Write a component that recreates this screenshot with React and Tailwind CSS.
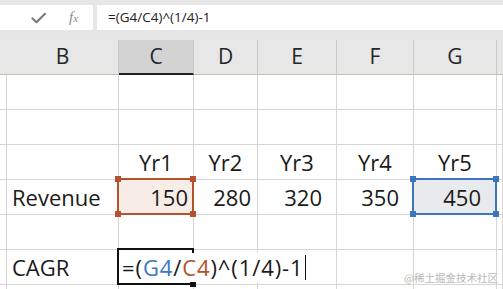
import React from "react";

const Check = () => (
  <svg width="16" height="12" viewBox="0 0 16 12" className="block">
    <path d="M1.5 6.5 L5.5 10.2 L14 1.8" fill="none" stroke="#7a7a7a" strokeWidth="2.2" strokeLinecap="round" strokeLinejoin="round" />
  </svg>
);

const Corner = ({ className, color }) => (
  <div className={`absolute w-[6px] h-[6px] ${color} ${className}`} />
);

export default function App() {
  const hdr = "h-[35px] bg-[#e7e7e7] border-r border-b border-r-[#cdc8c1] border-b-[#cabfae] flex items-center justify-center text-[21px] text-[#262626]";
  const cell = "h-[35px] border-r border-b border-[#d6d6d6] flex items-center text-[22px] text-[#1a1a1a]";
  return (
    <div className="relative w-[503px] h-[289px] overflow-hidden bg-white font-['Open_Sans',sans-serif]">
      {/* formula bar */}
      <div className="h-[40px] bg-[#e6e6e6] pt-[5px]">
        <div className="flex h-[25px]">
          <div className="w-[93px] bg-white flex items-center">
            <div className="ml-[31px]"><Check /></div>
            <div className="ml-[22px] font-['Liberation_Serif',serif] italic text-[15px] text-[#8a8a8a] leading-none">
              f<span className="text-[11px]">x</span>
            </div>
          </div>
          <div className="w-[4px]" />
          <div className="flex-1 bg-white pl-[11px] flex items-center text-[13.5px] text-[#222]">=(G4/C4)^(1/4)-1</div>
        </div>
      </div>

      {/* grid */}
      <div className="grid grid-cols-[7px_112px_75px_64px_79px_77px_83px_6px]">
        {/* header */}
        <div className="h-[35px] bg-[#e7e7e7] border-b border-[#cabfae]" />
        <div className={hdr}>B</div>
        <div className="h-[35px] bg-[#d3d3d3] border-r border-r-[#cdc8c1] border-b-2 border-b-[#1f1f1f] flex items-center justify-center text-[21px] text-[#262626]">C</div>
        <div className={hdr}>D</div>
        <div className={hdr}>E</div>
        <div className={hdr}>F</div>
        <div className={hdr}>G</div>
        <div className="h-[35px] bg-[#e7e7e7] border-b border-[#cabfae]" />

        {/* rows 1-2 empty */}
        {[0, 1].map((r) => (
          <React.Fragment key={r}>
            <div className={cell} />
            <div className={cell} />
            <div className={cell} />
            <div className={cell} />
            <div className={cell} />
            <div className={cell} />
            <div className={cell} />
            <div className={cell} />
          </React.Fragment>
        ))}

        {/* row 3: years */}
        <div className={cell} />
        <div className={cell} />
        <div className={`${cell} justify-center`}>Yr1</div>
        <div className={`${cell} justify-center`}>Yr2</div>
        <div className={`${cell} justify-center`}>Yr3</div>
        <div className={`${cell} justify-center`}>Yr4</div>
        <div className={`${cell} justify-center`}>Yr5</div>
        <div className={cell} />

        {/* row 4: revenue */}
        <div className={cell} />
        <div className={`${cell} pl-[5px]`}>Revenue</div>
        <div className={`${cell} relative justify-end pr-[5px] bg-[#f7ece6]`}>
          <span className="relative z-10">150</span>
          <div className="absolute -left-[2px] -top-[2px] w-[77px] h-[37px] border-2 border-[#b5522e]">
            <Corner color="bg-[#b5522e]" className="-left-[4px] -top-[4px]" />
            <Corner color="bg-[#b5522e]" className="-right-[4px] -top-[4px]" />
            <Corner color="bg-[#b5522e]" className="-left-[4px] -bottom-[4px]" />
            <Corner color="bg-[#b5522e]" className="-right-[4px] -bottom-[4px]" />
          </div>
        </div>
        <div className={`${cell} justify-end pr-[6px]`}>280</div>
        <div className={`${cell} justify-end pr-[14px]`}>320</div>
        <div className={`${cell} justify-end pr-[14px]`}>350</div>
        <div className={`${cell} relative justify-end pr-[15px] bg-[#e9eaed]`}>
          <span className="relative z-10">450</span>
          <div className="absolute -left-[2px] -top-[2px] w-[85px] h-[37px] border-2 border-[#3e73bd]">
            <Corner color="bg-[#3e73bd]" className="-left-[4px] -top-[4px]" />
            <Corner color="bg-[#3e73bd]" className="-right-[4px] -top-[4px]" />
            <Corner color="bg-[#3e73bd]" className="-left-[4px] -bottom-[4px]" />
            <Corner color="bg-[#3e73bd]" className="-right-[4px] -bottom-[4px]" />
          </div>
        </div>
        <div className={cell} />

        {/* row 5 empty */}
        <div className={cell} />
        <div className={cell} />
        <div className={cell} />
        <div className={cell} />
        <div className={cell} />
        <div className={cell} />
        <div className={cell} />
        <div className={cell} />

        {/* row 6: CAGR */}
        <div className={cell} />
        <div className={`${cell} pl-[5px]`}>CAGR</div>
        <div className={`${cell} relative`}>
          <div className="absolute -left-[2px] -top-[2px] w-[77px] h-[37px] border-2 border-[#111] z-10">
            <div className="absolute -right-[4px] -bottom-[4px] w-[6px] h-[6px] bg-[#111]" />
          </div>
          <div className="absolute left-[2px] top-[3px] h-[29px] bg-white z-20 whitespace-nowrap flex items-center pl-[1px] pr-[1px] tracking-[0.9px] text-[22px] text-[#1a1a1a]">
            =(<span className="text-[#3b78c4]">G4</span>/<span className="text-[#b4502b]">C4</span>)^(1/4)-1
            <span className="ml-[1px] w-[1px] h-[25px] bg-[#111]" />
          </div>
        </div>
        <div className={cell} />
        <div className={cell} />
        <div className={cell} />
        <div className={cell} />
        <div className={cell} />

        {/* partial row 7 */}
        {[0, 1, 2, 3, 4, 5, 6, 7].map((i) => (
          <div key={i} className="h-[10px] border-r border-[#d6d6d6]" />
        ))}
      </div>

      <div className="absolute left-[404px] top-[273px] text-[10.5px] leading-none text-[#b9b9b9] font-['Noto_Sans_CJK_SC',sans-serif] z-30">
        @稀土掘金技术社区
      </div>
    </div>
  );
}
